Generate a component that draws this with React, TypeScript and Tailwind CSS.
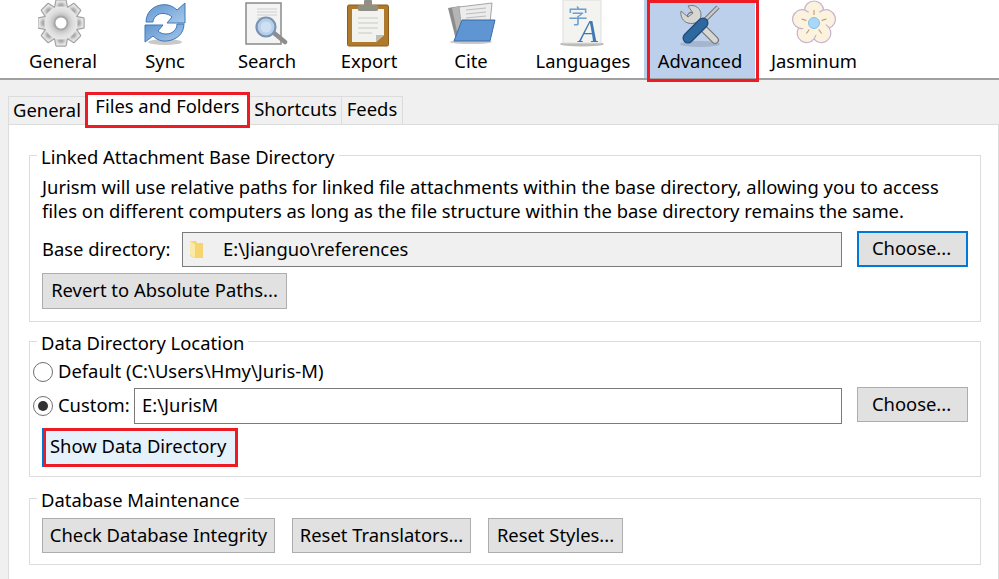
import type { ReactNode } from "react";

function GearIcon() {
  const teeth = [0, 45, 90, 135, 180, 225, 270, 315];
  const shape = (stroke: boolean) => (
    <g stroke={stroke ? "#a3a3a3" : "none"} strokeWidth={stroke ? 2.4 : 0} fill={stroke ? "#a3a3a3" : "url(#gear)"}>
      {teeth.map((a) => (
        <path key={a} d="M-4.5 -22.5h9l2 10h-13z" transform={`rotate(${a})`} strokeLinejoin="round" />
      ))}
      <circle r="16.5" />
    </g>
  );
  return (
    <svg width="50" height="48" viewBox="0 0 50 48" aria-hidden="true" className="blur-[0.4px]">
      <defs>
        <radialGradient id="gear" cx="0.5" cy="0.5" r="0.6">
          <stop offset="0.2" stopColor="#ababab" />
          <stop offset="0.6" stopColor="#dcdcdc" />
          <stop offset="1" stopColor="#f2f2f2" />
        </radialGradient>
      </defs>
      <g transform="translate(23 23)">
        {shape(true)}
        {shape(false)}
        <circle r="6.5" fill="#ffffff" stroke="#a8a8a8" strokeWidth="2" />
      </g>
    </svg>
  );
}

function SyncIcon() {
  return (
    <svg width="50" height="48" viewBox="0 0 50 48" aria-hidden="true" className="blur-[0.4px]">
      <defs>
        <linearGradient id="syncTop" x1="0" y1="0" x2="1" y2="1">
          <stop offset="0" stopColor="#5f95d0" />
          <stop offset="1" stopColor="#a9c8ea" />
        </linearGradient>
      </defs>
      <ellipse cx="25" cy="42" rx="17" ry="3" fill="#c9c9c9" />
      <path d="M6 22C6 10 17 3 28 5c4 1 7 3 9 5l8-7v20H27l5-6c-4-4-12-5-16-1-2 2-3 4-3 6z" fill="url(#syncTop)" stroke="#3f78b5" />
      <path d="M44 24c0 12-11 18-22 17-4-1-7-3-9-5l-8 6V25h18l-5 6c4 4 12 4 16 0 2-2 3-4 3-7z" fill="url(#syncTop)" stroke="#3f78b5" />
    </svg>
  );
}

function SearchIcon() {
  return (
    <svg width="46" height="48" viewBox="0 0 46 48" aria-hidden="true" className="blur-[0.4px]">
      <rect x="2" y="3" width="35" height="41" fill="#f3f3f3" stroke="#8b8b8b" strokeWidth="1.5" />
      <path d="M13 9h20M13 12h20M13 15h20M13 18h8" stroke="#cfcfcf" />
      <path d="M30 33l11 9" stroke="#8d8d8d" strokeWidth="4.5" strokeLinecap="round" />
      <circle cx="22" cy="27" r="9.5" fill="#b6cfea" stroke="#7b93b3" strokeWidth="2.2" />
      <circle cx="22" cy="27" r="5.5" fill="#cfe0f2" />
    </svg>
  );
}

function ExportIcon() {
  return (
    <svg width="46" height="48" viewBox="0 0 46 48" aria-hidden="true" className="blur-[0.4px]">
      <rect x="1.5" y="5" width="41" height="41" rx="1.5" fill="#b07a2c" stroke="#8a5c1d" />
      <path d="M6 9h32v26l-8 7H6z" fill="#f2f2ee" />
      <path d="M30 42l8-7h-8z" fill="#bdbdb8" />
      <path d="M12 18h20M12 23h20M12 28h20M12 33h14" stroke="#c8c8c8" />
      <rect x="12" y="5" width="20" height="6" rx="1.5" fill="#8f8f85" />
      <rect x="18" y="0" width="8" height="6" rx="1" fill="#8f8f85" />
    </svg>
  );
}

function FolderIcon() {
  return (
    <svg width="50" height="48" viewBox="0 0 50 48" aria-hidden="true" className="blur-[0.4px]">
      <ellipse cx="25" cy="42" rx="21" ry="2" fill="#c9c9c9" />
      <path d="M2 8l12-2 8 34H10z" fill="#8d8d8d" />
      <path d="M6 8l8-2 6 30H12z" fill="#b5b5b5" />
      <path d="M13 7l33-4-2 20H15z" fill="#ececec" stroke="#a5a5a5" />
      <path d="M20 10l20-2M20 14l20-2M20 18l20-2" stroke="#bcbcbc" />
      <path d="M16 20h33l-5 21H8z" fill="#5f95d2" stroke="#3b6da8" />
    </svg>
  );
}

function LanguagesIcon() {
  return (
    <svg width="46" height="48" viewBox="0 0 46 48" aria-hidden="true" className="blur-[0.3px]">
      <ellipse cx="22" cy="44" rx="22" ry="2.5" fill="#bdbdb7" />
      <path d="M3 0h38v43H3z" fill="#f3f3f0" stroke="#dedede" />
      <text x="8" y="24" fontSize="20" fill="#6f9ed1" fontFamily="'Noto Sans CJK SC', sans-serif">
        字
      </text>
      <text x="19" y="42" fontSize="31" fontStyle="italic" fill="#3f78b5" fontFamily="'Liberation Serif', serif">
        A
      </text>
    </svg>
  );
}

function ToolsIcon() {
  return (
    <svg width="46" height="48" viewBox="0 0 46 48" aria-hidden="true" className="blur-[0.4px]">
      <ellipse cx="23" cy="42" rx="20" ry="3" fill="#8f9fb5" opacity="0.55" />
      <path d="M14 14l24 24" stroke="#77777a" strokeWidth="8" strokeLinecap="round" />
      <path d="M14 14l24 24" stroke="#d6d6d2" strokeWidth="5.5" strokeLinecap="round" />
      <path d="M4 9l7 6 5-4-5-7c7-2 13 2 13 9 0 6-7 10-13 8-5-1-8-7-7-12z" fill="#d6d6d2" stroke="#77777a" />
      <path d="M41 5l-17 17" stroke="#66666a" strokeWidth="4.5" />
      <path d="M41 5l-17 17" stroke="#c8c8c6" strokeWidth="2.5" />
      <path d="M26 21L11 36" stroke="#1f4a78" strokeWidth="11" strokeLinecap="round" />
      <path d="M26 21L11 36" stroke="#2f689f" strokeWidth="8.5" strokeLinecap="round" />
    </svg>
  );
}

function FlowerIcon() {
  const petals = [0, 72, 144, 216, 288];
  return (
    <svg width="44" height="46" viewBox="0 0 44 46" aria-hidden="true" className="blur-[0.3px]">
      <g transform="translate(22 23)">
        {petals.map((a) => (
          <circle key={a} cx="0" cy="-12.5" r="9.5" fill="#fbf3dd" stroke="#c9b3cf" strokeWidth="1.2" transform={`rotate(${a})`} />
        ))}
        <circle r="12" fill="#fbf3dd" />
        {petals.map((a) => (
          <path key={a} d="M0 -8V-13" stroke="#b98f74" strokeWidth="1" transform={`rotate(${a})`} />
        ))}
        <circle r="5.5" fill="#a5d8fa" stroke="#89bfe6" />
      </g>
    </svg>
  );
}

const toolbar = [
  { label: "General", icon: <GearIcon />, width: "w-[102px]" },
  { label: "Sync", icon: <SyncIcon />, width: "w-[102px]" },
  { label: "Search", icon: <SearchIcon />, width: "w-[102px]" },
  { label: "Export", icon: <ExportIcon />, width: "w-[102px]" },
  { label: "Cite", icon: <FolderIcon />, width: "w-[102px]" },
  { label: "Languages", icon: <LanguagesIcon />, width: "w-[122px]" },
];

function ToolbarItem({ label, icon, width }: { label: string; icon: ReactNode; width: string }) {
  return (
    <div className={`flex ${width} shrink-0 flex-col items-center`}>
      <div className="flex h-[48px] items-start justify-center">{icon}</div>
      <span className="mt-[1px] leading-[24px]">{label}</span>
    </div>
  );
}

function Button({ children, className = "", focused }: { children: ReactNode; className?: string; focused?: boolean }) {
  const border = focused ? "border-2 border-[#0078d7]" : "border border-[#adadad]";
  return <div className={`flex shrink-0 items-center justify-center bg-[#e1e1e1] pb-[2px] ${border} ${className}`}>{children}</div>;
}

function Group({ title, className, children }: { title: string; className: string; children: ReactNode }) {
  return (
    <fieldset className={`ml-[20px] w-[952px] border border-[#dcdcdc] pl-[12px] pr-[12px] ${className}`}>
      <legend className="ml-[-5px] h-[24px] px-[4px] leading-[28px]">{title}</legend>
      {children}
    </fieldset>
  );
}

function Radio({ checked }: { checked?: boolean }) {
  return (
    <span className="flex h-[20px] w-[20px] shrink-0 items-center justify-center rounded-full border border-[#6f6f6f] bg-white">
      {checked && <span className="h-[10px] w-[10px] rounded-full bg-[#333333]" />}
    </span>
  );
}

export default function App() {
  return (
    <div className="flex h-[579px] w-[999px] flex-col overflow-hidden bg-white font-['Noto_Sans',sans-serif] text-[18.4px] text-black">
      <header className="flex h-[80px] shrink-0 border-b-2 border-[#a0a0a0] pl-[12px]">
        {toolbar.map((t) => (
          <ToolbarItem key={t.label} {...t} />
        ))}
        <div className="relative flex w-[112px] shrink-0 flex-col items-center border-r border-white bg-[#bcd0ec] pl-[1px]">
          <div className="flex h-[48px] items-start pt-[2px]">
            <ToolsIcon />
          </div>
          <span className="mt-[1px] leading-[24px]">Advanced</span>
          <div className="absolute left-[3px] top-0 h-[82px] w-[112px] border-[3px] border-[#ed1c24]" />
        </div>
        <div className="flex w-[116px] shrink-0 flex-col items-center">
          <div className="flex h-[48px] items-start">
            <FlowerIcon />
          </div>
          <span className="mt-[1px] leading-[24px]">Jasminum</span>
        </div>
      </header>

      <div className="flex-1 bg-[#f0f0f0] pl-[8px] pt-[16px]">
        <div className="flex h-[28px] items-stretch">
          <div className="flex w-[77px] items-center justify-center border-l border-t border-[#dcdcdc] pb-[2px]">General</div>
          <div className="relative z-10 -mt-[4px] flex h-[36px] w-[165px] items-center justify-center border-[3px] border-[#ed1c24] bg-white pb-[8px]">
            Files and Folders
          </div>
          <div className="flex w-[92px] items-center justify-center border-r border-t border-[#dcdcdc] pb-[4px]">Shortcuts</div>
          <div className="flex w-[61px] items-center justify-center border-r border-t border-[#dcdcdc] pb-[4px]">Feeds</div>
        </div>

        <div className="h-[600px] border border-[#dcdcdc] bg-white pt-[18px]">
          <Group title="Linked Attachment Base Directory" className="h-[179px]">
            <p className="mt-[8px] whitespace-nowrap leading-[24px]">
              Jurism will use relative paths for linked file attachments within the base directory, allowing you to access
              <br />
              files on different computers as long as the file structure within the base directory remains the same.
            </p>
            <div className="mt-[8px] flex items-center">
              <span className="w-[140px] shrink-0">Base directory:</span>
              <div className="flex h-[35px] w-[660px] shrink-0 items-center border border-[#7a7a7a] bg-[#f0f0f0] pl-[6px]">
                <svg width="16" height="20" viewBox="0 0 16 20" aria-hidden="true" className="blur-[0.3px]">
                  <path d="M1 2h6l1 2h6v15H5l-4-2z" fill="#f6d46f" />
                  <path d="M1 2l5 3v14l-5-3z" fill="#fbe9a8" />
                </svg>
                <span className="ml-[18px]">E:\Jianguo\references</span>
              </div>
              <Button focused className="ml-[15px] h-[36px] w-[111px] pr-[2px]">
                Choose...
              </Button>
            </div>
            <Button className="mt-[6px] h-[36px] w-[245px]">Revert to Absolute Paths...</Button>
          </Group>

          <Group title="Data Directory Location" className="mt-[7px] h-[148px]">
            <div className="-ml-[9px] mt-[4px] flex h-[30px] items-center gap-[5px]">
              <Radio />
              <span className="pb-[2px]">Default (C:\Users\Hmy\Juris-M)</span>
            </div>
            <div className="-ml-[9px] mt-[1px] flex items-center gap-[5px]">
              <Radio checked />
              <span className="w-[71px] shrink-0 pb-[2px]">Custom:</span>
              <div className="flex h-[36px] w-[708px] shrink-0 items-center border border-[#7a7a7a] pb-[2px] pl-[7px]">E:\JurisM</div>
              <Button className="-mt-[3px] ml-[10px] h-[35px] w-[111px] pr-[2px]">Choose...</Button>
            </div>
            <div className="mt-[4px] h-[39px] w-[196px] border-l border-[#0078d7]">
              <div className="flex h-full items-center border-[3px] border-[#ed1c24] bg-[#e5f1fb] pb-[3px] pl-[4px]">Show Data Directory</div>
            </div>
          </Group>

          <Group title="Database Maintenance" className="mt-[9px] h-[79px]">
            <div className="flex gap-[17px] pt-[8px]">
              <Button className="h-[35px] w-[233px]">Check Database Integrity</Button>
              <Button className="h-[35px] w-[179px]">Reset Translators...</Button>
              <Button className="h-[35px] w-[135px]">Reset Styles...</Button>
            </div>
          </Group>
        </div>
      </div>
    </div>
  );
}
